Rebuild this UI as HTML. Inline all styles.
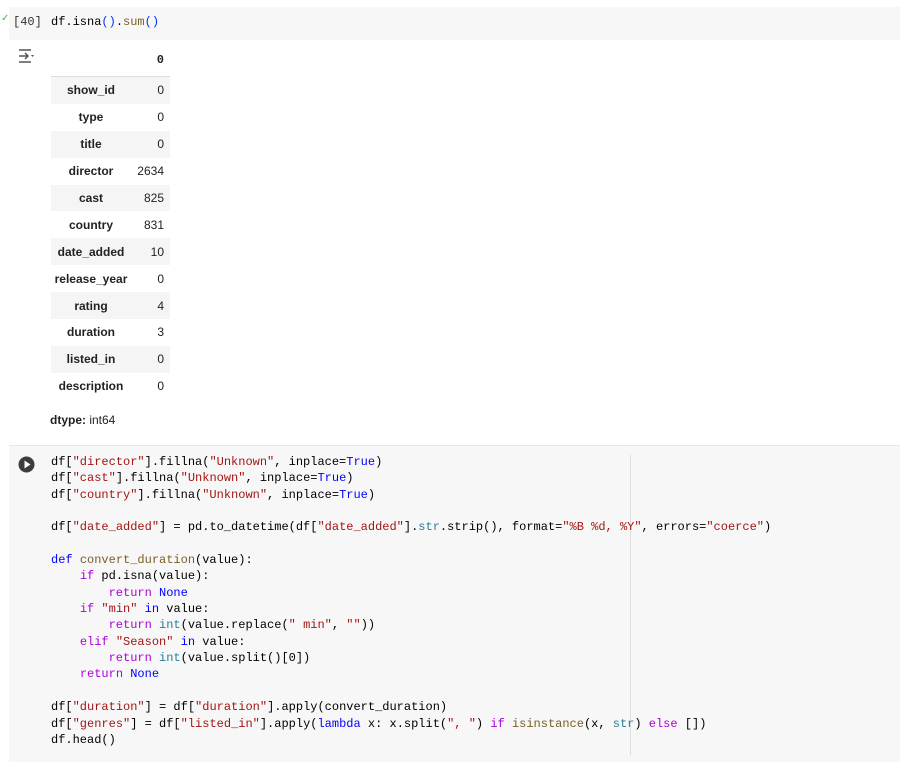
<!DOCTYPE html>
<html><head><style>
body{margin:0;width:900px;height:761px;background:#fff;overflow:hidden;font-family:"Liberation Sans",sans-serif;position:relative}
.mono{font-family:"Liberation Mono",monospace;font-size:12px}
.cell1{position:absolute;left:9px;top:7px;width:891px;height:33px;background:#f7f7f7}
.cell2{position:absolute;left:9px;top:445px;width:891px;height:316px;background:#f7f7f7;border-top:1px solid #e8e8e8}
table{position:absolute;left:51px;top:46px;border-collapse:collapse;font-size:12px;color:#222}
td,th{height:26.9px;padding:0 6px;}
th.rh{font-weight:bold;text-align:center;width:74px;padding:0 3px}
td{text-align:right;width:30px;padding:0 6px 0 3px}
tr.s{background:#f5f5f5}
thead th{height:27px;border-bottom:1px solid #ddd;text-align:right;padding-bottom:3px}
pre{margin:0;position:absolute;left:51px;top:454px;line-height:16.35px;color:#000}
.s1{color:#a31515}.k{color:#0000ff}.p{color:#af00db}.f{color:#795e26}.t{color:#267f99}.b{color:#0431fa}
</style></head><body>
<div class="cell1"></div>
<div style="position:absolute;left:1px;top:13px;color:#4caf50;font-size:10px">✓</div>
<div class="mono" style="position:absolute;left:13px;top:15px;color:#333">[40]</div>
<div class="mono" style="position:absolute;left:51px;top:15px">df.isna<span class="b">()</span>.<span class="f">sum</span><span class="b">()</span></div>
<svg style="position:absolute;left:17px;top:48px" width="20" height="16" viewBox="0 0 20 16"><path d="M2 2h12M2 14h12M2 8h9M8 5l3 3-3 3" stroke="#555" stroke-width="1.5" fill="none"/><path d="M14 7l3 0-1.5 2z" fill="#555"/></svg>
<table>
<thead><tr><th></th><th class="mono" style="font-weight:bold">0</th></tr></thead>
<tbody>
<tr class="s"><th class="rh">show_id</th><td>0</td></tr>
<tr><th class="rh">type</th><td>0</td></tr>
<tr class="s"><th class="rh">title</th><td>0</td></tr>
<tr><th class="rh">director</th><td>2634</td></tr>
<tr class="s"><th class="rh">cast</th><td>825</td></tr>
<tr><th class="rh">country</th><td>831</td></tr>
<tr class="s"><th class="rh">date_added</th><td>10</td></tr>
<tr><th class="rh">release_year</th><td>0</td></tr>
<tr class="s"><th class="rh">rating</th><td>4</td></tr>
<tr><th class="rh">duration</th><td>3</td></tr>
<tr class="s"><th class="rh">listed_in</th><td>0</td></tr>
<tr><th class="rh">description</th><td>0</td></tr>
</tbody></table>
<div style="position:absolute;left:50px;top:413px;font-size:12px;color:#222"><b>dtype:</b> int64</div>
<div class="cell2"></div>
<svg style="position:absolute;left:18px;top:456px" width="17" height="17"><circle cx="8.5" cy="8.5" r="8" fill="#3c3c3c"/><path d="M6.5 4.5l6 4-6 4z" fill="#fff"/></svg>
<div style="position:absolute;left:630px;top:455px;width:1px;height:300px;background:#ddd"></div>
<pre class="mono">df[<span class="s1">"director"</span>].fillna(<span class="s1">"Unknown"</span>, inplace=<span class="k">True</span>)
df[<span class="s1">"cast"</span>].fillna(<span class="s1">"Unknown"</span>, inplace=<span class="k">True</span>)
df[<span class="s1">"country"</span>].fillna(<span class="s1">"Unknown"</span>, inplace=<span class="k">True</span>)

df[<span class="s1">"date_added"</span>] = pd.to_datetime(df[<span class="s1">"date_added"</span>].<span class="t">str</span>.strip(), format=<span class="s1">"%B %d, %Y"</span>, errors=<span class="s1">"coerce"</span>)

<span class="k">def</span> <span class="f">convert_duration</span>(value):
    <span class="p">if</span> pd.isna(value):
        <span class="p">return</span> <span class="k">None</span>
    <span class="p">if</span> <span class="s1">"min"</span> <span class="k">in</span> value:
        <span class="p">return</span> <span class="t">int</span>(value.replace(<span class="s1">" min"</span>, <span class="s1">""</span>))
    <span class="p">elif</span> <span class="s1">"Season"</span> <span class="k">in</span> value:
        <span class="p">return</span> <span class="t">int</span>(value.split()[0])
    <span class="p">return</span> <span class="k">None</span>

df[<span class="s1">"duration"</span>] = df[<span class="s1">"duration"</span>].apply(convert_duration)
df[<span class="s1">"genres"</span>] = df[<span class="s1">"listed_in"</span>].apply(<span class="k">lambda</span> x: x.split(<span class="s1">", "</span>) <span class="p">if</span> <span class="f">isinstance</span>(x, <span class="t">str</span>) <span class="p">else</span> [])
df.head()</pre>
</body></html>
